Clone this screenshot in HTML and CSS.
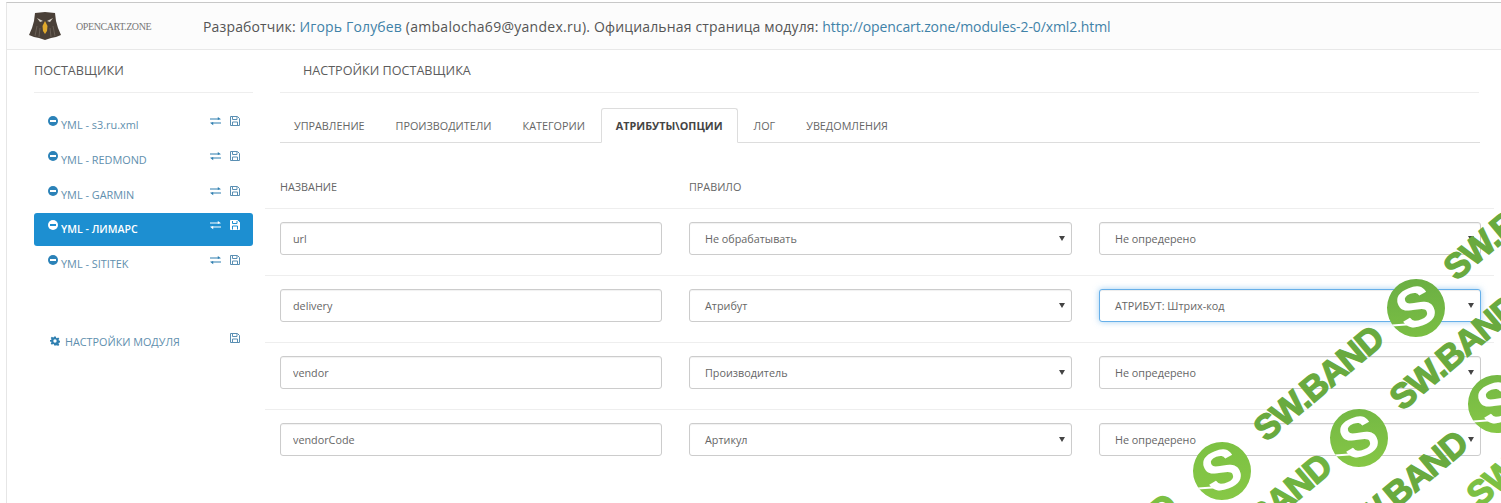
FILE: index.html
```html
<!DOCTYPE html>
<html lang="ru">
<head>
<meta charset="utf-8">
<title>OpenCart Zone</title>
<link rel="stylesheet" href="styles.css">
</head>
<body>
<svg class="sprites" width="0" height="0" aria-hidden="true">
  <symbol id="i-minus" viewBox="0 0 10 10"><circle cx="5" cy="5" r="5" fill="currentColor"/><rect x="2" y="4" width="6" height="2" class="cut"/></symbol>
  <symbol id="i-swap" viewBox="0 0 12 10"><path fill="currentColor" d="M0 2.300h8.500V.500L12 3 8.500 3.800V3.300H0zM12 6.700H3.500V6.200L0 7 3.500 9.500V7.700H12z"/></symbol>
  <symbol id="i-save" viewBox="0 0 10 10"><path fill="var(--save-fill, none)" stroke="currentColor" stroke-width="1" d="M.5.500h7l2 2v7h-9z"/><path fill="none" stroke="var(--save-inner, currentColor)" stroke-width="1" d="M2.500 1v2.500h4.500V1M2.500 9.500V6h5v3.500"/></symbol>
</svg>
<div class="page">
  <header class="topbar">
    <div class="brand">
      <svg class="logo" viewBox="0 0 32 28">
        <path fill="#4a4038" d="M6 1 16 0 26 1 27 9 29 16 32 23 27 25 22 26 16 28 10 26 5 25 0 23 3 16 5 9z"/>
        <path fill="none" stroke="#7d736a" stroke-width=".6" d="M8 14 6 24M11 16 10 25M24 14 26 24M21 16 22 25"/>
        <path fill="#e0a92c" d="M16 9 18.500 14 18 19 16 22 14 19 13.500 14z"/>
        <path fill="#d9d4ca" d="M8 6 14 9 11 10zM24 6 18 9 21 10z"/>
      </svg>
      <span class="brand-name">OPENCART.ZONE</span>
    </div>
    <p class="credits">Разработчик: <a href="#">Игорь Голубев</a> <span class="email">(ambalocha69@yandex.ru).</span> Официальная страница модуля: <a class="url" href="#">http://opencart.zone/modules-2-0/xml2.html</a></p>
  </header>
  <div class="columns">
    <aside class="sidebar">
      <h2 class="side-title">ПОСТАВЩИКИ</h2>
      <ul class="suppliers">
        <li class="supplier"><svg class="ic-minus"><use href="#i-minus"/></svg><a class="supplier-name" href="#">YML - s3.ru.xml</a><svg class="ic-swap"><use href="#i-swap"/></svg><svg class="ic-save"><use href="#i-save"/></svg></li>
        <li class="supplier"><svg class="ic-minus"><use href="#i-minus"/></svg><a class="supplier-name" href="#">YML - REDMOND</a><svg class="ic-swap"><use href="#i-swap"/></svg><svg class="ic-save"><use href="#i-save"/></svg></li>
        <li class="supplier"><svg class="ic-minus"><use href="#i-minus"/></svg><a class="supplier-name" href="#">YML - GARMIN</a><svg class="ic-swap"><use href="#i-swap"/></svg><svg class="ic-save"><use href="#i-save"/></svg></li>
        <li class="supplier active"><svg class="ic-minus"><use href="#i-minus"/></svg><a class="supplier-name" href="#">YML - ЛИМАРС</a><svg class="ic-swap"><use href="#i-swap"/></svg><svg class="ic-save"><use href="#i-save"/></svg></li>
        <li class="supplier"><svg class="ic-minus"><use href="#i-minus"/></svg><a class="supplier-name" href="#">YML - SITITEK</a><svg class="ic-swap"><use href="#i-swap"/></svg><svg class="ic-save"><use href="#i-save"/></svg></li>
      </ul>
      <div class="module-settings">
        <svg class="ic-gear" viewBox="0 0 24 24"><path fill="currentColor" fill-rule="evenodd" d="M10 1h4l.7 3.300 2 .8L19.500 3.300l2.800 2.800-1.800 2.800.8 2 3.300.7v4l-3.300.7-.8 2 1.800 2.800-2.800 2.800-2.800-1.800-2 .8L14 23h-4l-.7-3.300-2-.8-2.800 1.800-2.800-2.800 1.800-2.800-.8-2L-.6 14v-4l3.300-.7.8-2-1.800-2.800 2.800-2.800 2.800 1.800 2-.8zM12 8a4 4 0 1 0 0 8 4 4 0 0 0 0-8z"/></svg>
        <a class="module-link" href="#">НАСТРОЙКИ МОДУЛЯ</a>
        <svg class="ic-save"><use href="#i-save"/></svg>
      </div>
    </aside>
    <main class="content">
      <h2 class="main-title">НАСТРОЙКИ ПОСТАВЩИКА</h2>
      <nav class="tabs">
        <a class="tab" href="#">УПРАВЛЕНИЕ</a>
        <a class="tab" href="#">ПРОИЗВОДИТЕЛИ</a>
        <a class="tab" href="#">КАТЕГОРИИ</a>
        <a class="tab active" href="#">АТРИБУТЫ\ОПЦИИ</a>
        <a class="tab" href="#">ЛОГ</a>
        <a class="tab" href="#">УВЕДОМЛЕНИЯ</a>
      </nav>
      <div class="grid-row head-row">
        <span>НАЗВАНИЕ</span><span>ПРАВИЛО</span><span></span>
      </div>
      <div class="grid-row">
        <input class="field" value="url">
        <div class="select">Не обрабатывать</div>
        <div class="select">Не опредерено</div>
      </div>
      <div class="grid-row">
        <input class="field" value="delivery">
        <div class="select">Атрибут</div>
        <div class="select focus">АТРИБУТ: Штрих-код</div>
      </div>
      <div class="grid-row">
        <input class="field" value="vendor">
        <div class="select">Производитель</div>
        <div class="select">Не опредерено</div>
      </div>
      <div class="grid-row last">
        <input class="field" value="vendorCode">
        <div class="select">Артикул</div>
        <div class="select">Не опредерено</div>
      </div>
    </main>
  </div>
</div>
<div class="watermarks" aria-hidden="true">
  <span class="wm-text wt1">SW.BAND</span>
  <span class="wm-text wt2">SW.BAND</span>
  <span class="wm-text wt3">SW.BAND</span>
  <span class="wm-text wt4">SW.BAND</span>
  <span class="wm-text wt5">SW.BAND</span>
  <span class="wm-text wt6">SW.BAND</span>
  <span class="wm-text wt7">SW.BAND</span>
  <span class="wm-coin wc1">S</span>
  <span class="wm-coin wc2">S</span>
  <span class="wm-coin wc3">S</span>
  <span class="wm-coin wc4">S</span>
</div>
</body>
</html>
```
FILE: styles.css
```css
* { box-sizing: border-box; }
html, body { margin: 0; padding: 0; height: 503px; overflow: hidden; background: #fff; }
body { font-family: "Open Sans", sans-serif; color: #555; position: relative; }
a { color: #4a86ad; text-decoration: none; }
.sprites { position: absolute; }
.cut { fill: var(--cut, #fff); }
.page { margin: 2px 0 0 6px; border-top: 1px solid #c8c8c8; border-left: 1px solid #e6e6e6; height: 501px; }
.topbar { display: flex; align-items: center; height: 47px; background: #fcfcfc; border-bottom: 1px solid #e8e8e8; }
.brand { display: flex; align-items: center; width: 196px; padding-left: 22px; flex: none; }
.logo { width: 32px; height: 28px; flex: none; }
.brand-name { margin-left: 15px; font-family: "Liberation Serif", serif; font-size: 10px; color: #777; letter-spacing: -.42px; }
.credits { margin: 0; font-size: 14px; color: #555; letter-spacing: .15px; }
.credits a { color: #3f82a8; }
.credits .email { letter-spacing: .28px; }
.credits .url { letter-spacing: -.1px; }
.columns { display: flex; }
.sidebar { width: 219px; margin-left: 27px; flex: none; }
.side-title, .main-title { margin: 0; height: 43px; line-height: 41px; font-size: 12.600px; font-weight: 400; color: #5c5c5c; border-bottom: 1px solid #eee; }
.suppliers { list-style: none; margin: 15px 0 0; padding: 0; }
.supplier { display: flex; align-items: center; height: 35px; padding: 0 13px 0 14px; border-radius: 3px; }
.supplier.active { background: #1d8fd1; color: #fff; height: 33px; margin: 0 0 1px; --cut: #1d8fd1; --save-fill: #fff; --save-inner: #1d8fd1; }
.supplier.active a { color: #fff; font-weight: 600; font-size: 10.600px; padding-top: 1px; }
.supplier.active svg { color: #fff; }
.ic-minus { width: 10px; height: 10px; margin: -9px 3px 0 0; color: #2b82b8; }
.supplier-name { font-size: 10.900px; flex: 1; color: #5f8fae; padding-bottom: 2px; }
.ic-swap { width: 11px; height: 10px; margin: -9px 9px 0 0; color: #2f7fb0; }
.ic-save { width: 10px; height: 10px; margin-top: -9px; color: #5a8fb3; }
.module-settings { display: flex; align-items: center; height: 20px; margin-top: 49px; padding: 0 13px 0 16px; }
.module-settings .ic-save { margin-top: -6px; }
.ic-gear { width: 10px; height: 10px; margin-right: 5px; color: #2f7fb0; }
.module-link { flex: 1; font-size: 10.800px; color: #5f8fae; }
.content { width: 1229px; margin-left: 12px; }
.main-title { margin: 0 15px; padding-left: 23px; }
.tabs { display: flex; height: 50px; margin: 0 14px 0 15px; padding-top: 15px; border-bottom: 1px solid #ddd; }
.tab { height: 35px; line-height: 33px; padding: 0 14px 0 13px; margin-right: 2px; font-size: 10.800px; color: #666; border: 1px solid transparent; }
.tab.active { margin: 0 2px 0 -1px; height: 35px; padding: 0 14px; font-weight: 700; color: #444; background: #fff; border-color: #ddd #ddd #fff; border-radius: 3px 3px 0 0; }
.grid-row { display: grid; grid-template-columns: 382px 383px 382px; column-gap: 27px; align-items: start; height: 67px; padding: 13px 13px 0 15px; border-bottom: 1px solid #eee; font-size: 10.800px; color: #666; }
.head-row { height: 66px; padding-top: 36px; }
.grid-row.last { border-bottom: 0; }
.field, .select { height: 33px; font: 10.800px/31px "Open Sans", sans-serif; color: #666; padding: 0 15px; border: 1px solid #ccc; border-radius: 3px; background: #fff; box-shadow: inset 0 1px 1px rgba(0,0,0,.06); width: 100%; }
.field { padding: 0 12px; }
.select { position: relative; }
.select::after { content: ""; position: absolute; right: 6px; top: 13px; border: 3px solid transparent; border-top: 5px solid #444; border-bottom: 0; }
.select.focus { border-color: #66afe9; box-shadow: inset 0 1px 1px rgba(0,0,0,.075), 0 0 6px rgba(102,175,233,.6); }
.watermarks { position: absolute; inset: 0; overflow: hidden; pointer-events: none; }
.wm-text { position: absolute; transform: translate(-50%, -50%) rotate(-40deg); font-family: "Liberation Sans", sans-serif; font-weight: 700; font-size: 35px; line-height: 1; letter-spacing: -1.300px; color: #69aa3f; -webkit-text-stroke: 1.300px currentColor; white-space: nowrap; }
.wm-coin { position: absolute; width: 58px; height: 58px; margin: -29px 0 0 -29px; border-radius: 50%; background: linear-gradient(20deg, #7cc043, #69ad44); color: #fff; font: 700 56px/56px "Liberation Sans", sans-serif; text-align: center; transform: rotate(-22deg); overflow: hidden; }
.wm-coin::after { content: ""; position: absolute; left: -4px; top: 39px; width: 32px; height: 2px; background: #fff; transform: rotate(18deg); }
.wt1 { left: 1318px; top: 383px; }
.wt2 { left: 1454px; top: 352px; }
.wt3 { left: 1508px; top: 222px; }
.wt4 { left: 1402px; top: 488px; }
.wt5 { left: 1266px; top: 511px; color: #6fb340; }
.wt6 { left: 1531px; top: 449px; color: #7cc043; }
.wt7 { left: 1112px; top: 551px; color: #7cc043; }
.wc1 { left: 1416px; top: 308px; }
.wc2 { left: 1359px; top: 438px; background: linear-gradient(20deg, #88c946, #72b644); }
.wc3 { left: 1222px; top: 471px; background: linear-gradient(20deg, #88c946, #7bc042); }
.wc4 { left: 1497px; top: 404px; background: linear-gradient(20deg, #88c946, #72b644); }
```
